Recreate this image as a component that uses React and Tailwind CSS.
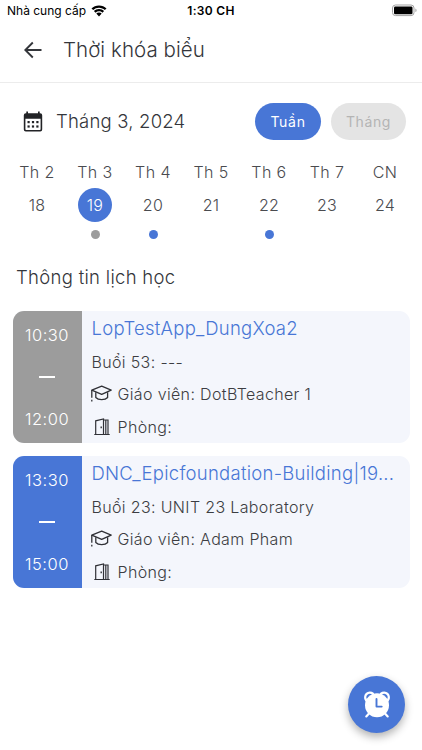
import React from 'react';

const days = [
  { label: 'Th 2', date: 18 },
  { label: 'Th 3', date: 19, selected: true, dot: 'bg-[#9c9c9c]' },
  { label: 'Th 4', date: 20, dot: 'bg-[#4876d6]' },
  { label: 'Th 5', date: 21 },
  { label: 'Th 6', date: 22, dot: 'bg-[#4876d6]' },
  { label: 'Th 7', date: 23 },
  { label: 'CN', date: 24 },
];

const lessons = [
  {
    start: '10:30',
    end: '12:00',
    title: 'LopTestApp_DungXoa2',
    session: 'Buổi 53: ---',
    teacher: 'DotBTeacher 1',
    color: 'bg-[#9c9c9c]',
  },
  {
    start: '13:30',
    end: '15:00',
    title: 'DNC_Epicfoundation-Building|19...',
    session: 'Buổi 23: UNIT 23 Laboratory',
    teacher: 'Adam Pham',
    color: 'bg-[#4876d6]',
  },
];

function WifiIcon() {
  return (
    <svg width="16" height="12" viewBox="0 0 16 12">
      <path d="M8 .4C5 .4 2.400 1.500.5 3.400l1.700 1.700A8.300 8.300 0 0 1 8 2.800c2.300 0 4.300.9 5.800 2.300l1.700-1.700C13.600 1.500 11 .4 8 .4Z" />
      <path d="M8 4c-2 0-3.800.8-5.100 2l1.700 1.700A5 5 0 0 1 8 6.300c1.300 0 2.500.5 3.400 1.400L13.100 6C11.800 4.800 10 4 8 4Z" />
      <path d="M8 7.500c-1 0-2 .4-2.700 1.100L8 11.500l2.700-2.900c-.7-.7-1.700-1.100-2.700-1.100Z" />
    </svg>
  );
}

function BatteryIcon() {
  return (
    <svg width="26" height="13" viewBox="0 0 26 13">
      <rect x="0.500" y="1" width="21.500" height="10.600" rx="3" fill="#fff" stroke="#a3a3a3" />
      <rect x="2" y="2.400" width="18.500" height="7.800" rx="1.300" />
      <path d="M23.500 4.500c1.300.5 1.300 3.100 0 3.600Z" fill="#8a8a8a" />
    </svg>
  );
}

function BackIcon() {
  return (
    <svg width="18" height="18" viewBox="0 0 18 18" fill="none" stroke="#34363b" strokeWidth="1.900">
      <path d="M17.500 9H2M8.800 1.500 1.300 9l7.500 7.500" />
    </svg>
  );
}

function CalendarIcon() {
  return (
    <svg width="20" height="21" viewBox="0 0 20 21">
      <path
        fillRule="evenodd"
        fill="#222326"
        d="M3.300.4h1.700v1.800h10V.4h1.700v1.800h.5a2 2 0 0 1 2 2v14.400a2 2 0 0 1-2 2H2.800a2 2 0 0 1-2-2V4.200a2 2 0 0 1 2-2h.5ZM2.400 7.700v10.600c0 .5.300.8.8.8h13.600c.5 0 .8-.3.800-.8V7.700Z"
      />
      <g fill="#222326">
        <rect x="4.500" y="10" width="2.200" height="2.200" />
        <rect x="8.900" y="10" width="2.200" height="2.200" />
        <rect x="13.300" y="10" width="2.200" height="2.200" />
        <rect x="4.500" y="14.400" width="2.200" height="2.200" />
        <rect x="8.900" y="14.400" width="2.200" height="2.200" />
        <rect x="13.300" y="14.400" width="2.200" height="2.200" />
      </g>
    </svg>
  );
}

function TeacherIcon() {
  return (
    <svg width="22" height="18" viewBox="0 0 22 18" fill="none" stroke="#303136" strokeWidth="1.300" strokeLinejoin="round">
      <path d="M.8 5.100 10.700 1.200 20.200 5.100 10.700 9.400Z" />
      <path d="M4.800 7.200v5.300c2.400 2.900 9.400 2.900 11.800 0V7.200" />
      <path d="M.8 5.100v7.700M.8 14.800v1.600" />
    </svg>
  );
}

function DoorIcon() {
  return (
    <svg width="16" height="18" viewBox="0 0 16 18" fill="none" stroke="#303136" strokeWidth="1.200">
      <path d="M.3 16.500h15.400M1.700 16.500V2.800L9.500 1v15.500M9.500 2h4.500v14.500M11.800 2v14.500" />
      <path d="M7.200 8.400v1.800" strokeWidth="1.400" />
    </svg>
  );
}

function AlarmIcon() {
  return (
    <svg width="28" height="28" viewBox="0 0 28 28" fill="none">
      <path d="M3.200 9.200a4.700 4.700 0 0 1 6.700-6.500M24.800 9.200a4.700 4.700 0 0 0-6.700-6.500" stroke="#fff" strokeWidth="2.400" strokeLinecap="round" />
      <path d="m6 22.500-2.700 2.900M22 22.500l2.700 2.900" stroke="#fff" strokeWidth="2.200" strokeLinecap="round" />
      <circle cx="14" cy="14.200" r="12" fill="#fff" />
      <path d="M13.500 8v7.600h5.200" stroke="#4876d6" strokeWidth="1.900" strokeLinecap="round" strokeLinejoin="round" />
    </svg>
  );
}

function LessonCard({ lesson }) {
  return (
    <div className="flex h-[132px] overflow-hidden rounded-[11px] bg-[#f4f6fc]">
      <div className={`flex w-[69px] shrink-0 flex-col items-center justify-between py-3.5 text-[16.5px] leading-5 font-light tracking-[0.5px] text-white ${lesson.color}`}>
        <span>{lesson.start}</span>
        <span className="h-0.5 w-4 bg-white" />
        <span>{lesson.end}</span>
      </div>
      <div className="min-w-0 flex-1 pl-2.5 text-base font-light tracking-[0.35px] whitespace-nowrap text-[#3c3d42]">
        <h3 className="mt-[3px] text-[18.5px] leading-7 font-light tracking-[0.26px] text-[#4876d6]">{lesson.title}</h3>
        <p className="mt-2 leading-6">{lesson.session}</p>
        <div className="mt-2 flex items-center leading-6">
          <span className="-ml-px"><TeacherIcon /></span>
          <span className="ml-[5px]">Giáo viên: {lesson.teacher}</span>
        </div>
        <div className="mt-[9px] flex items-center leading-6">
          <span className="ml-0.5"><DoorIcon /></span>
          <span className="ml-2">Phòng:</span>
        </div>
      </div>
    </div>
  );
}

export default function App() {
  return (
    <div className="relative h-[750px] w-[422px] overflow-hidden bg-white font-['Inter',sans-serif] text-[#34363b]">
      <div className="grid h-[21px] grid-cols-3 items-center pr-1 pl-[7px] text-xs text-black">
        <div className="flex items-center gap-[5px] whitespace-nowrap">
          <span>Nhà cung cấp</span>
          <WifiIcon />
        </div>
        <span className="pr-[3px] text-center font-semibold tracking-[0.3px]">1:30 CH</span>
        <span className="justify-self-end"><BatteryIcon /></span>
      </div>

      <header className="flex h-[62px] items-center gap-[21px] border-b border-[#ececec] pb-[3px] pl-6">
        <BackIcon />
        <h1 className="text-[20.5px] leading-8 font-light tracking-[0.05px]">Thời khóa biểu</h1>
      </header>

      <div className="mt-5 flex h-[37px] items-center pr-4 pl-[23px]">
        <CalendarIcon />
        <span className="ml-[13px] flex-1 text-[18.5px] font-light tracking-[0.2px]">Tháng 3, 2024</span>
        <button className="h-[37px] w-[66px] rounded-full bg-[#4876d6] text-sm tracking-[0.7px] text-white">Tuần</button>
        <button className="ml-2.5 h-[37px] w-[75px] rounded-full bg-[#e4e4e4] text-sm tracking-[0.6px] text-[#b4b4b4]">Tháng</button>
      </div>

      <div className="mt-5 grid grid-cols-7 px-2">
        {days.map((day) => (
          <div key={day.label} className="flex flex-col items-center text-base font-light text-[#4a4b4f]">
            <span className="leading-6 tracking-[0.4px]">{day.label}</span>
            <span
              className={`mt-1 flex h-[34px] w-[34px] items-center justify-center rounded-full tracking-[0.3px] ${
                day.selected ? 'bg-[#4876d6] text-white' : ''
              }`}
            >
              {day.date}
            </span>
            <span className={`mt-2 h-[9px] w-[9px] rounded-full ${day.dot || ''}`} />
          </div>
        ))}
      </div>

      <h2 className="mt-6 pl-4 text-[18.5px] leading-7 font-light tracking-[0.3px]">Thông tin lịch học</h2>

      <div className="mt-5 flex flex-col gap-[12.5px] px-[12.5px]">
        {lessons.map((lesson) => (
          <LessonCard key={lesson.start} lesson={lesson} />
        ))}
      </div>

      <button className="absolute right-[17px] bottom-[17px] flex h-[57px] w-[57px] items-center justify-center rounded-full bg-[#4876d6] shadow-[0_4px_9px_rgba(0,0,0,0.3)]">
        <AlarmIcon />
      </button>
    </div>
  );
}
